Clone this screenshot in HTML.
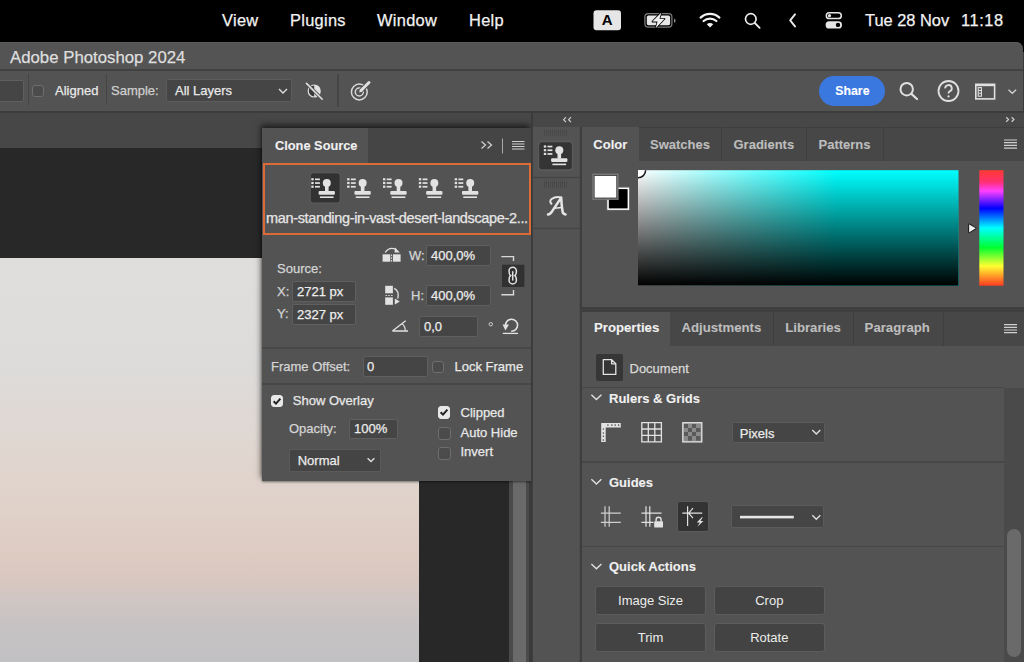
<!DOCTYPE html>
<html><head><meta charset="utf-8">
<style>
*{margin:0;padding:0;box-sizing:border-box}
html,body{width:1024px;height:662px;overflow:hidden;background:#535353;font-family:"Liberation Sans",sans-serif;color:#e0e0e0}
.a{position:absolute}
.t{position:absolute;white-space:nowrap;line-height:1;-webkit-text-stroke:0.25px currentColor}
.t[style*="font-weight:700"]{-webkit-text-stroke:0.1px currentColor}
#menubar{left:0;top:0;width:1024px;height:42px;background:#000}
#menubar .t{color:#f2f2f2;font-size:16.4px;letter-spacing:0.3px}
#titlebar{left:0;top:42px;width:1023px;height:29px;background:#545454;border-bottom:2px solid #414141;border-top-right-radius:7px;box-shadow:inset 0 1px 0 #5c5c5c}
#opts{left:0;top:71px;width:1024px;height:40px;background:#535353}
#optsline{left:0;top:111px;width:1024px;height:2px;background:#3c3c3c}
#doctabs{left:0;top:113px;width:531px;height:35px;background:#474747}
#canvas{left:0;top:148px;width:509px;height:514px;background:#282828}
#image{left:0;top:258px;width:419px;height:404px;background:linear-gradient(#dfdedd 0%,#dddcdb 25%,#dedad8 33%,#e0d7d1 46%,#e0d2ca 60%,#ddcbc2 74%,#d8c7c0 80%,#cdc5c4 86%,#c5c2c3 92%,#c1c0c2 100%)}
#scroll{left:509px;top:148px;width:23.8px;height:514px;background:#4a4a4a}
#dock{left:531px;top:113px;width:51px;height:549px;background:#535353}
#rpanel{left:582px;top:127px;width:442px;height:535px;background:#535353}
.inp{position:absolute;background:#454545;border:1px solid #5f5f5f;border-radius:2px}
.cb{position:absolute;width:12.4px;height:12.4px;border:1.5px solid #6e6e6e;border-radius:3px;background:#4b4b4b}
.cbon{background:#e8e8e8;border-color:#e8e8e8}
.btn{border-radius:3px;background:#434343;border:1.5px solid #5c5c5c;font-size:13px;color:#ececec;text-align:center;line-height:27px;white-space:nowrap}
</style></head><body>
<div id="menubar" class="a">
  <div class="t" style="left:222px;top:12px">View</div>
  <div class="t" style="left:290px;top:12px">Plugins</div>
  <div class="t" style="left:377px;top:12px">Window</div>
  <div class="t" style="left:469px;top:12px">Help</div>
  
  <svg class="a" style="left:588px;top:6px" width="260" height="30" viewBox="588 6 260 30">
    <rect x="593.5" y="10.2" width="27.5" height="20" rx="3" fill="#e6e6e6"/>
    <text x="607.2" y="25.3" font-family="Liberation Sans" font-weight="700" font-size="15" text-anchor="middle" fill="#000">A</text>
    <rect x="644.9" y="13.7" width="27" height="13.4" rx="3.4" fill="none" stroke="#7a7a7a" stroke-width="1.3"/>
    <rect x="646.8" y="15.6" width="23.3" height="9.6" rx="1.6" fill="#e6e6e6"/>
    <path d="M674 18.5 a2 2.2 0 0 1 0 4.3z" fill="#8a8a8a"/>
    <path d="M661.4 12.4 L652.4 21.6 L657.6 21.6 L655.6 28.2 L664.6 18.8 L659.4 18.8z" fill="#f0f0f0" stroke="#000" stroke-width="1.6" stroke-linejoin="round" paint-order="stroke"/>
    <path d="M700.6 17.6 A14 14 0 0 1 719.4 17.6" fill="none" stroke="#f2f2f2" stroke-width="2.2" stroke-linecap="round"/>
    <path d="M703.6 21 A9.6 9.6 0 0 1 716.4 21" fill="none" stroke="#f2f2f2" stroke-width="2.2" stroke-linecap="round"/>
    <path d="M706.8 24.2 L710 27.6 L713.2 24.2 A4.6 4.6 0 0 0 706.8 24.2z" fill="#f2f2f2"/>
    <circle cx="750.8" cy="19" r="5.3" fill="none" stroke="#eaeaea" stroke-width="1.7"/>
    <path d="M754.8 23 L759.6 27.8" stroke="#eaeaea" stroke-width="1.9" stroke-linecap="round"/>
    <path d="M795 14.3 L790.2 20.3 L795 26.4" fill="none" stroke="#eaeaea" stroke-width="1.9" stroke-linecap="round" stroke-linejoin="round"/>
    <rect x="826.3" y="12.8" width="15" height="5.8" rx="2.9" fill="none" stroke="#e6e6e6" stroke-width="1.5"/>
    <circle cx="829.5" cy="15.7" r="1.6" fill="#e6e6e6"/>
    <rect x="825.6" y="21.3" width="16.4" height="7.2" rx="3.6" fill="#e6e6e6"/>
    <circle cx="838" cy="24.9" r="2.2" fill="#000"/>
  </svg>
  <div class="t" style="left:865px;top:12px;font-size:16.4px;letter-spacing:0">Tue 28 Nov</div>
  <div class="t" style="left:961px;top:12px;font-size:16.4px;letter-spacing:0.6px">11:18</div>
</div>
<div class="a" style="left:1008px;top:42px;width:16px;height:12px;background:#000"></div>
<div id="titlebar" class="a"><div class="t" style="left:10px;top:8px;font-size:16.8px;color:#dedede">Adobe Photoshop 2024</div></div>
<div class="a" style="left:1022.6px;top:52px;width:1.4px;height:60px;background:#3a3a3a;z-index:5"></div>
<div id="opts" class="a">
  <div class="inp" style="left:-4px;top:9px;width:28px;height:22px"></div>
  <div class="a" style="left:27.5px;top:3px;width:1.6px;height:31px;background:#454545"></div>
  <div class="cb" style="left:32px;top:14px"></div>
  <div class="t" style="left:55px;top:13px;font-size:13px;color:#e8e8e8">Aligned</div>
  <div class="a" style="left:105.8px;top:3px;width:1.6px;height:31px;background:#454545"></div>
  <div class="t" style="left:111px;top:13px;font-size:13px;color:#cfcfcf">Sample:</div>
  <div class="inp" style="left:166px;top:8px;width:126px;height:23px;background:#454545;border-color:#5c5c5c"></div>
  <div class="t" style="left:175px;top:13px;font-size:13px;color:#e8e8e8">All Layers</div>
  <svg class="a" style="left:277px;top:16px" width="12" height="8"><path d="M2 2 L6 6 L10 2" fill="none" stroke="#ddd" stroke-width="1.4"/></svg>
  <svg class="a" style="left:300px;top:7px" width="30" height="30" viewBox="300 78 30 30">
    <circle cx="314.2" cy="91" r="6.6" fill="#e0e0e0"/>
    <path d="M314.2 85.6 A5.4 5.4 0 0 0 314.2 96.4z" fill="#3a3a3a"/>
    <path d="M306.5 83.4 L322.2 99.2" stroke="#535353" stroke-width="3.4"/>
    <path d="M306.5 83.4 L322.2 99.2" stroke="#e0e0e0" stroke-width="1.6" stroke-linecap="round"/>
  </svg>
  <div class="a" style="left:337px;top:3px;width:1.8px;height:33px;background:#454545"></div>
  <svg class="a" style="left:345px;top:5px" width="32" height="30" viewBox="345 76 32 30">
    <circle cx="359.3" cy="92" r="7.9" fill="none" stroke="#d8d8d8" stroke-width="1.5"/>
    <circle cx="359.3" cy="92" r="4" fill="none" stroke="#d8d8d8" stroke-width="1.5"/>
    <path d="M360 91.5 L369.6 82" stroke="#535353" stroke-width="5"/>
    <path d="M361 90.5 L369 82.5" stroke="#e0e0e0" stroke-width="3" stroke-linecap="round"/>
    <path d="M359.2 92.6 L360.2 89.2 L362.6 91.6z" fill="#e0e0e0"/>
  </svg>
  <div class="a" style="left:819px;top:5px;width:66px;height:30px;border-radius:15px;background:#3a78e0"></div>
  <div class="t" style="left:835.3px;top:14.3px;font-size:12.3px;font-weight:700;color:#fff">Share</div>
  <svg class="a" style="left:896px;top:7px" width="28" height="28" viewBox="896 78 28 28">
    <circle cx="906.7" cy="89.2" r="6.2" fill="none" stroke="#e0e0e0" stroke-width="2"/>
    <path d="M911.4 93.9 L917 99" stroke="#e0e0e0" stroke-width="2.2" stroke-linecap="round"/>
  </svg>
  <svg class="a" style="left:935px;top:7px" width="28" height="28" viewBox="935 78 28 28">
    <circle cx="948.5" cy="91" r="10" fill="none" stroke="#e0e0e0" stroke-width="1.8"/>
    <path d="M945.2 88.4 A3.3 3.3 0 1 1 949.6 91.4 Q948.5 92 948.5 93.6" fill="none" stroke="#e0e0e0" stroke-width="1.8"/>
    <circle cx="948.5" cy="96.4" r="1.1" fill="#e0e0e0"/>
  </svg>
  <svg class="a" style="left:972px;top:8px" width="50" height="26" viewBox="972 79 50 26">
    <rect x="975.8" y="84.3" width="18.8" height="14.6" fill="none" stroke="#e0e0e0" stroke-width="1.6"/>
    <path d="M976 85.6 L994.5 85.6" stroke="#e0e0e0" stroke-width="1.2"/>
    <rect x="978.2" y="87.6" width="3.2" height="8.6" fill="none" stroke="#e0e0e0" stroke-width="1.1"/>
    <path d="M978.2 90.5 H981.4 M978.2 93.3 H981.4" stroke="#e0e0e0" stroke-width="1"/>
    <path d="M1008.5 89.8 L1012.3 93.3 L1016.1 89.8" fill="none" stroke="#d0d0d0" stroke-width="1.4"/>
  </svg>
</div>
<div id="optsline" class="a"></div>
<div id="doctabs" class="a"></div>
<div id="canvas" class="a"></div>
<div id="image" class="a"></div>
<div id="scroll" class="a"><div class="a" style="left:4.1px;top:0;width:12.7px;height:514px;background:#6a6a6a"></div><div class="a" style="left:20px;top:0;width:3.8px;height:514px;background:#3a3a3a"></div></div>
<div id="clone" class="a" style="left:262px;top:128px;width:269px;height:353px;background:#535353;box-shadow:-1px -3px 6px rgba(0,0,0,0.6),0 1px 2px rgba(0,0,0,0.4)">
  <div class="a" style="left:0;top:0;width:269px;height:35px;background:#454545"></div>
  <div class="a" style="left:0;top:0;width:106px;height:35px;background:#535353"></div>
  <div class="t" style="left:13px;top:12px;font-size:12.8px;font-weight:700;color:#f0f0f0">Clone Source</div>
  <svg class="a" style="left:215px;top:8px" width="50" height="20" viewBox="477 136 50 20">
    <path d="M481.5 141.5 L485.5 145 L481.5 148.5 M487.5 141.5 L491.5 145 L487.5 148.5" fill="none" stroke="#cfcfcf" stroke-width="1.3"/>
    <path d="M502.5 138.5 L502.5 153.5" stroke="#aaa" stroke-width="1"/>
    <path d="M512 141.5 H524.5 M512 144 H524.5 M512 146.5 H524.5 M512 149 H524.5" stroke="#cfcfcf" stroke-width="1.2"/>
  </svg>
  <div class="a" style="left:1px;top:35px;width:268px;height:72px;border:2.4px solid #dc6b38"></div>
</div>
<svg class="a" style="left:262px;top:128px" width="269" height="353" viewBox="262 128 269 353">
  <rect x="310.2" y="172.8" width="30" height="30.2" rx="3" fill="#323232" stroke="#5e5e5e" stroke-width="1"/>
  <g transform="translate(311.0,178)" fill="#e2e2e2">
<rect x="0.3" y="0.2" width="2.4" height="2.2"/><rect x="0.3" y="3.9" width="2.4" height="2.2"/><rect x="0.3" y="7.6" width="2.4" height="2.2"/>
<rect x="4" y="0.5" width="4.9" height="1.7"/><rect x="4" y="4.2" width="4.9" height="1.7"/><rect x="4" y="7.9" width="4.9" height="1.7"/>
<circle cx="15.8" cy="5" r="4"/><rect x="14" y="7.5" width="3.6" height="6"/>
<rect x="7.6" y="13" width="16.3" height="3.8" rx="1"/><rect x="8.9" y="18.4" width="13.7" height="1.6"/></g><g transform="translate(346.85,178)" fill="#e2e2e2">
<rect x="0.3" y="0.2" width="2.4" height="2.2"/><rect x="0.3" y="3.9" width="2.4" height="2.2"/><rect x="0.3" y="7.6" width="2.4" height="2.2"/>
<rect x="4" y="0.5" width="4.9" height="1.7"/><rect x="4" y="4.2" width="4.9" height="1.7"/><rect x="4" y="7.9" width="4.9" height="1.7"/>
<circle cx="15.8" cy="5" r="4"/><rect x="14" y="7.5" width="3.6" height="6"/>
<rect x="7.6" y="13" width="16.3" height="3.8" rx="1"/><rect x="8.9" y="18.4" width="13.7" height="1.6"/></g><g transform="translate(382.7,178)" fill="#e2e2e2">
<rect x="0.3" y="0.2" width="2.4" height="2.2"/><rect x="0.3" y="3.9" width="2.4" height="2.2"/><rect x="0.3" y="7.6" width="2.4" height="2.2"/>
<rect x="4" y="0.5" width="4.9" height="1.7"/><rect x="4" y="4.2" width="4.9" height="1.7"/><rect x="4" y="7.9" width="4.9" height="1.7"/>
<circle cx="15.8" cy="5" r="4"/><rect x="14" y="7.5" width="3.6" height="6"/>
<rect x="7.6" y="13" width="16.3" height="3.8" rx="1"/><rect x="8.9" y="18.4" width="13.7" height="1.6"/></g><g transform="translate(418.55,178)" fill="#e2e2e2">
<rect x="0.3" y="0.2" width="2.4" height="2.2"/><rect x="0.3" y="3.9" width="2.4" height="2.2"/><rect x="0.3" y="7.6" width="2.4" height="2.2"/>
<rect x="4" y="0.5" width="4.9" height="1.7"/><rect x="4" y="4.2" width="4.9" height="1.7"/><rect x="4" y="7.9" width="4.9" height="1.7"/>
<circle cx="15.8" cy="5" r="4"/><rect x="14" y="7.5" width="3.6" height="6"/>
<rect x="7.6" y="13" width="16.3" height="3.8" rx="1"/><rect x="8.9" y="18.4" width="13.7" height="1.6"/></g><g transform="translate(454.4,178)" fill="#e2e2e2">
<rect x="0.3" y="0.2" width="2.4" height="2.2"/><rect x="0.3" y="3.9" width="2.4" height="2.2"/><rect x="0.3" y="7.6" width="2.4" height="2.2"/>
<rect x="4" y="0.5" width="4.9" height="1.7"/><rect x="4" y="4.2" width="4.9" height="1.7"/><rect x="4" y="7.9" width="4.9" height="1.7"/>
<circle cx="15.8" cy="5" r="4"/><rect x="14" y="7.5" width="3.6" height="6"/>
<rect x="7.6" y="13" width="16.3" height="3.8" rx="1"/><rect x="8.9" y="18.4" width="13.7" height="1.6"/></g>
  <!-- flip H -->
  <g fill="#e2e2e2"><rect x="382.6" y="254.3" width="7.7" height="7.4"/><rect x="392.9" y="254.3" width="7.7" height="7.4"/>
  <rect x="391" y="254.5" width="0.9" height="1.6"/><rect x="391" y="257.3" width="0.9" height="1.6"/><rect x="391" y="260" width="0.9" height="1.6"/>
  <path d="M395 247.6 L399.8 252.6 L394.6 252.6z"/></g>
  <path d="M385.2 252.5 Q389.5 246 396 249.6" fill="none" stroke="#e2e2e2" stroke-width="1.3"/>
  <!-- flip V -->
  <g fill="#e2e2e2"><rect x="385.2" y="285.8" width="7.7" height="7.5"/><rect x="385.2" y="297.4" width="7.7" height="7.4"/>
  <rect x="385.5" y="295" width="1.6" height="0.9"/><rect x="388.2" y="295" width="1.6" height="0.9"/><rect x="391" y="295" width="1.6" height="0.9"/>
  <path d="M394.8 298.6 L399.8 301.4 L394.8 304.4z"/></g>
  <path d="M394.2 288.4 Q399.5 291 397.8 298.6" fill="none" stroke="#e2e2e2" stroke-width="1.3"/>
  <!-- link -->
  <path d="M501.3 256.6 H513.5 V261" fill="none" stroke="#d8d8d8" stroke-width="1.4"/>
  <path d="M513.5 290 V294.8 H501.3" fill="none" stroke="#d8d8d8" stroke-width="1.4"/>
  <rect x="502" y="264.7" width="22.4" height="22.3" fill="#313131"/>
  <path d="M510.6 275.6 C509.2 274.8 509 273.4 509 271 A3.7 3.7 0 0 1 516.4 271 C516.4 273.4 516.2 274.8 514.8 275.6 C516.2 276.4 516.4 277.8 516.4 280.2 A3.7 3.7 0 0 1 509 280.2 C509 277.8 509.2 276.4 510.6 275.6z" fill="none" stroke="#e2e2e2" stroke-width="1.5"/>
  <path d="M512.7 271.2 V280.6" stroke="#e2e2e2" stroke-width="1.5"/>
  <!-- angle -->
  <path d="M392.4 331 H408 M392.4 331 L405.7 320.8" fill="none" stroke="#e2e2e2" stroke-width="1.3"/>
  <path d="M401.9 323.4 Q405.4 326.6 405.3 330.6" fill="none" stroke="#e2e2e2" stroke-width="1.2"/>
  <circle cx="490.8" cy="324.2" r="1.7" fill="none" stroke="#d0d0d0" stroke-width="1"/>
  <!-- reset -->
  <path d="M505.6 325.6 A6 6 0 1 1 511.2 331.2" fill="none" stroke="#e2e2e2" stroke-width="1.6"/>
  <path d="M502.6 324.4 L509 324.4 L505.4 330.4z" fill="#e2e2e2"/>
  <path d="M502.8 333.4 H518" stroke="#e2e2e2" stroke-width="1.3"/>
</svg>
<div class="a" style="left:262px;top:128px;width:269px;height:353px">
  <div class="a" style="left:4px;top:79px;width:264px;height:24px;overflow:hidden"><div class="t" style="left:0;top:4.3px;font-size:14.5px;letter-spacing:-0.35px;color:#e6e6e6">man-standing-in-vast-desert-landscape-2...</div></div>
  <div class="t" style="left:15px;top:134.4px;font-size:13px;color:#d4d4d4">Source:</div>
  <div class="t" style="left:15px;top:157.4px;font-size:13px;color:#d4d4d4">X:</div>
  <div class="inp" style="left:30px;top:153px;width:64px;height:21px"></div>
  <div class="t" style="left:35px;top:157.4px;font-size:13px;color:#ececec">2721 px</div>
  <div class="t" style="left:15px;top:179.4px;font-size:13px;color:#d4d4d4">Y:</div>
  <div class="inp" style="left:30px;top:176px;width:64px;height:21px"></div>
  <div class="t" style="left:35px;top:180.4px;font-size:13px;color:#ececec">2327 px</div>
  <div class="t" style="left:147px;top:121.4px;font-size:13px;color:#d4d4d4">W:</div>
  <div class="inp" style="left:164px;top:117px;width:65px;height:21px"></div>
  <div class="t" style="left:169px;top:121.4px;font-size:13px;color:#ececec">400,0%</div>
  <div class="t" style="left:149px;top:161.4px;font-size:13px;color:#d4d4d4">H:</div>
  <div class="inp" style="left:164px;top:157px;width:65px;height:21px"></div>
  <div class="t" style="left:169px;top:161.4px;font-size:13px;color:#ececec">400,0%</div>
  <div class="inp" style="left:157px;top:188px;width:59px;height:20.5px"></div>
  <div class="t" style="left:162px;top:192.4px;font-size:13px;color:#ececec">0,0</div>
  <div class="a" style="left:0;top:219px;width:269px;height:2px;background:#474747"></div>
  <div class="t" style="left:9px;top:232.4px;font-size:13px;color:#d4d4d4">Frame Offset:</div>
  <div class="inp" style="left:100.5px;top:228px;width:65px;height:20.5px"></div>
  <div class="t" style="left:105px;top:232.4px;font-size:13px;color:#ececec">0</div>
  <div class="cb" style="left:169.6px;top:232.6px"></div>
  <div class="t" style="left:192.5px;top:232.4px;font-size:13px;color:#e8e8e8">Lock Frame</div>
  <div class="a" style="left:0;top:255px;width:269px;height:2px;background:#474747"></div>
  <div class="cb cbon" style="left:8.7px;top:266.5px"></div>
  <svg class="a" style="left:8.7px;top:266.5px" width="12" height="12"><path d="M2.6 6.2 L5 8.6 L9.4 3.6" fill="none" stroke="#222" stroke-width="2"/></svg>
  <div class="t" style="left:30.8px;top:265.9px;font-size:13px;color:#e8e8e8">Show Overlay</div>
  <div class="t" style="left:27px;top:294.4px;font-size:13px;color:#d4d4d4">Opacity:</div>
  <div class="inp" style="left:87px;top:290.7px;width:49px;height:20.6px"></div>
  <div class="t" style="left:92px;top:294.4px;font-size:13px;color:#ececec">100%</div>
  <div class="inp" style="left:26.5px;top:321.3px;width:92px;height:23px;background:#444;border-color:#5a5a5a"></div>
  <div class="t" style="left:35.7px;top:326.4px;font-size:13px;color:#ececec">Normal</div>
  <svg class="a" style="left:103px;top:328px" width="12" height="8"><path d="M2.6 2.2 L6 5.6 L9.4 2.2" fill="none" stroke="#ddd" stroke-width="1.4"/></svg>
  <div class="cb cbon" style="left:176.1px;top:278.3px"></div>
  <svg class="a" style="left:176.1px;top:278.3px" width="12" height="12"><path d="M2.6 6.2 L5 8.6 L9.4 3.6" fill="none" stroke="#222" stroke-width="2"/></svg>
  <div class="t" style="left:198.5px;top:277.9px;font-size:13px;color:#e8e8e8">Clipped</div>
  <div class="cb" style="left:176.3px;top:299.4px"></div>
  <div class="t" style="left:198.5px;top:297.7px;font-size:13px;color:#e8e8e8">Auto Hide</div>
  <div class="cb" style="left:176.3px;top:319.2px"></div>
  <div class="t" style="left:198.5px;top:317.4px;font-size:13px;color:#e8e8e8">Invert</div>
</div>
<div id="dock" class="a"></div>
<div id="topstrip" class="a" style="left:531px;top:113px;width:493px;height:14px;background:#474747"></div>
<svg class="a" style="left:531px;top:112px" width="493" height="550" viewBox="531 112 493 550">
  <path d="M566 117.2 L563.6 119.7 L566 122.2 M571 117.2 L568.6 119.7 L571 122.2" fill="none" stroke="#cfcfcf" stroke-width="1.2"/>
  <path d="M1006.2 117.2 L1008.6 119.5 L1006.2 121.8 M1011.6 117.2 L1014 119.5 L1011.6 121.8" fill="none" stroke="#cfcfcf" stroke-width="1.2"/>
  <rect x="531" y="112" width="1.8" height="550" fill="#3a3a3a"/>
  <rect x="579.8" y="127" width="2.4" height="535" fill="#3e3e3e"/>
  <rect x="544" y="129.7" width="1" height="6.3" fill="#484848"/><rect x="546" y="129.7" width="1" height="6.3" fill="#484848"/><rect x="548" y="129.7" width="1" height="6.3" fill="#484848"/><rect x="550" y="129.7" width="1" height="6.3" fill="#484848"/><rect x="552" y="129.7" width="1" height="6.3" fill="#484848"/><rect x="554" y="129.7" width="1" height="6.3" fill="#484848"/><rect x="556" y="129.7" width="1" height="6.3" fill="#484848"/><rect x="558" y="129.7" width="1" height="6.3" fill="#484848"/><rect x="560" y="129.7" width="1" height="6.3" fill="#484848"/><rect x="562" y="129.7" width="1" height="6.3" fill="#484848"/><rect x="564" y="129.7" width="1" height="6.3" fill="#484848"/><rect x="566" y="129.7" width="1" height="6.3" fill="#484848"/>
  <rect x="538" y="140.3" width="35" height="30.6" rx="4" fill="#5a5a5a"/>
  <rect x="539.2" y="142.2" width="32.6" height="27" rx="3" fill="#343434"/>
  <g transform="translate(543.5,145.2) scale(1.0)" fill="#e2e2e2">
<rect x="0.3" y="0.2" width="2.4" height="2.2"/><rect x="0.3" y="3.9" width="2.4" height="2.2"/><rect x="0.3" y="7.6" width="2.4" height="2.2"/>
<rect x="4" y="0.5" width="4.9" height="1.7"/><rect x="4" y="4.2" width="4.9" height="1.7"/><rect x="4" y="7.9" width="4.9" height="1.7"/>
<circle cx="15.8" cy="5" r="4"/><rect x="14" y="7.5" width="3.6" height="6"/>
<rect x="7.6" y="13" width="16.3" height="3.8" rx="1"/><rect x="8.9" y="18.4" width="13.7" height="1.6"/></g>
  <rect x="532.6" y="176.8" width="47.2" height="1.4" fill="#454545"/>
  <rect x="544" y="181.3" width="1" height="6.3" fill="#484848"/><rect x="546" y="181.3" width="1" height="6.3" fill="#484848"/><rect x="548" y="181.3" width="1" height="6.3" fill="#484848"/><rect x="550" y="181.3" width="1" height="6.3" fill="#484848"/><rect x="552" y="181.3" width="1" height="6.3" fill="#484848"/><rect x="554" y="181.3" width="1" height="6.3" fill="#484848"/><rect x="556" y="181.3" width="1" height="6.3" fill="#484848"/><rect x="558" y="181.3" width="1" height="6.3" fill="#484848"/><rect x="560" y="181.3" width="1" height="6.3" fill="#484848"/><rect x="562" y="181.3" width="1" height="6.3" fill="#484848"/><rect x="564" y="181.3" width="1" height="6.3" fill="#484848"/><rect x="566" y="181.3" width="1" height="6.3" fill="#484848"/>
  <path d="M548 214.6 Q549.6 214.6 551.4 212.4 L561.2 197.6 Q561.6 206 562.6 211.8 Q563 214.2 565.6 214.4" fill="none" stroke="#e6e6e6" stroke-width="2.5" stroke-linecap="round" stroke-linejoin="round"/>
  <path d="M561.2 197.6 Q556 196 551.6 199 Q549 201.2 551.4 203.8" fill="none" stroke="#e6e6e6" stroke-width="2" stroke-linecap="round"/>
  <path d="M554 208.2 L561.8 207.6" stroke="#e6e6e6" stroke-width="1.5" stroke-linecap="round"/>
  <rect x="532.6" y="227.8" width="47.2" height="1.4" fill="#454545"/>
</svg>
<div id="rpanel" class="a"></div>
<div id="rp" class="a" style="left:582px;top:127px;width:442px;height:535px">
  <div class="a" style="left:0;top:0;width:442px;height:34px;background:#474747;border-top:1px solid #3e3e3e"></div>
  <div class="a" style="left:0;top:0;width:57px;height:34px;background:#535353"></div>
  <div class="a" style="left:139.4px;top:0;width:1px;height:34px;background:#3f3f3f"></div>
  <div class="a" style="left:224.2px;top:0;width:1px;height:34px;background:#3f3f3f"></div>
  <div class="a" style="left:301px;top:0;width:1px;height:34px;background:#3f3f3f"></div>
  <div class="t" style="left:11.3px;top:10.5px;font-size:13px;font-weight:700;color:#f0f0f0">Color</div>
  <div class="t" style="left:68px;top:10.5px;font-size:13px;font-weight:700;color:#bdbdbd">Swatches</div>
  <div class="t" style="left:151.5px;top:10.5px;font-size:13px;font-weight:700;color:#bdbdbd">Gradients</div>
  <div class="t" style="left:236.5px;top:10.5px;font-size:13px;font-weight:700;color:#bdbdbd">Patterns</div>
  <div class="a" style="left:0;top:180px;width:442px;height:5px;background:#3f3f3f"></div>
  <div class="a" style="left:0;top:185px;width:442px;height:33.5px;background:#474747"></div>
  <div class="a" style="left:0;top:185px;width:88px;height:33.5px;background:#535353"></div>
  <div class="a" style="left:191.3px;top:185px;width:1px;height:33.5px;background:#3f3f3f"></div>
  <div class="a" style="left:270.7px;top:185px;width:1px;height:33.5px;background:#3f3f3f"></div>
  <div class="a" style="left:360.5px;top:185px;width:1px;height:33.5px;background:#3f3f3f"></div>
  <div class="t" style="left:12px;top:194px;font-size:13.2px;font-weight:700;color:#f0f0f0">Properties</div>
  <div class="t" style="left:99.4px;top:194px;font-size:13.2px;font-weight:700;color:#bdbdbd">Adjustments</div>
  <div class="t" style="left:203.2px;top:194px;font-size:13.2px;font-weight:700;color:#bdbdbd">Libraries</div>
  <div class="t" style="left:282.6px;top:194px;font-size:13.2px;font-weight:700;color:#bdbdbd">Paragraph</div>
  <div class="a" style="left:14px;top:226.7px;width:27px;height:27px;border-radius:2px;background:#363636"></div>
  <div class="t" style="left:47.5px;top:234.5px;font-size:13px;color:#d8d8d8">Document</div>
  <div class="a" style="left:0;top:259.5px;width:422px;height:1.5px;background:#474747"></div>
  <div class="a" style="left:422px;top:261px;width:20px;height:274px;background:#4a4a4a"></div>
  <div class="a" style="left:425.4px;top:402px;width:13.6px;height:128px;border-radius:7px;background:#6a6a6a"></div>
  <div class="t" style="left:27px;top:265px;font-size:13px;font-weight:700;color:#f0f0f0">Rulers &amp; Grids</div>
  <div class="a" style="left:149.5px;top:294.6px;width:93px;height:21.5px;border-radius:2px;background:#454545;border:1px solid #5a5a5a"></div>
  <div class="t" style="left:157.8px;top:299.5px;font-size:13px;color:#ececec">Pixels</div>
  <div class="a" style="left:0;top:334px;width:422px;height:1.5px;background:#474747"></div>
  <div class="t" style="left:27px;top:349px;font-size:13px;font-weight:700;color:#f0f0f0">Guides</div>
  <div class="a" style="left:95px;top:373.6px;width:32.3px;height:31.4px;border-radius:3px;background:#333;border:1px solid #5a5a5a"></div>
  <div class="a" style="left:149px;top:378.3px;width:93.3px;height:22.7px;border-radius:2px;background:#454545;border:1px solid #5a5a5a"></div>
  <div class="a" style="left:0;top:418.5px;width:422px;height:1.5px;background:#474747"></div>
  <div class="t" style="left:27px;top:433px;font-size:13px;font-weight:700;color:#f0f0f0">Quick Actions</div>
  <div class="btn a" style="left:13.3px;top:459px;width:110.5px;height:29px">Image Size</div>
  <div class="btn a" style="left:131.9px;top:459px;width:110.8px;height:29px">Crop</div>
  <div class="btn a" style="left:13.3px;top:496px;width:110.5px;height:29px">Trim</div>
  <div class="btn a" style="left:131.9px;top:496px;width:110.8px;height:29px">Rotate</div>
</div>
<svg class="a" style="left:582px;top:127px" width="442" height="535" viewBox="582 127 442 535">
  <path d="M1004 140.0 H1017 M1004 142.70000000000002 H1017 M1004 145.4 H1017 M1004 148.1 H1017" stroke="#cfcfcf" stroke-width="1.2"/>
  <path d="M1004 324.6 H1017 M1004 327.3 H1017 M1004 330 H1017 M1004 332.7 H1017" stroke="#cfcfcf" stroke-width="1.2"/>
  <defs>
    <linearGradient id="gh" x1="0" y1="0" x2="1" y2="0"><stop offset="0" stop-color="#fff"/><stop offset="0.62" stop-color="#00ffff"/><stop offset="1" stop-color="#00ffff"/></linearGradient>
    <linearGradient id="gv" x1="0" y1="0" x2="0" y2="1"><stop offset="0" stop-color="#000" stop-opacity="0"/><stop offset="1" stop-color="#000"/></linearGradient>
    <linearGradient id="hue" x1="0" y1="0" x2="0" y2="1">
      <stop offset="0" stop-color="#ff3a30"/><stop offset="0.1" stop-color="#ff3070"/><stop offset="0.18" stop-color="#ff40ff"/><stop offset="0.33" stop-color="#0000ff"/>
      <stop offset="0.5" stop-color="#00ffff"/><stop offset="0.67" stop-color="#00ff30"/><stop offset="0.83" stop-color="#ffff30"/><stop offset="1" stop-color="#ff3a20"/>
    </linearGradient>
  </defs>
  <rect x="638" y="170.2" width="320.5" height="115.5" fill="url(#gh)"/>
  <rect x="638" y="170.2" width="320.5" height="115.5" fill="url(#gv)"/>
  <clipPath id="gclip"><rect x="638" y="170.2" width="320.5" height="115.5"/></clipPath><circle cx="638" cy="170.2" r="7.6" fill="#fff" stroke="#1a1a1a" stroke-width="1.6" clip-path="url(#gclip)"/>
  <rect x="979.3" y="170.2" width="24.2" height="115.5" fill="url(#hue)"/>
  <path d="M968.6 225 Q968.6 223.6 970 224.2 L975.6 227.6 Q976.6 228.3 975.6 229 L970 232.4 Q968.6 233.2 968.6 231.6z" fill="#f2f2f2" stroke="#1e1e1e" stroke-width="1.1" stroke-linejoin="round"/>
  <rect x="606.4" y="186.7" width="23.6" height="24.1" fill="#666"/>
  <rect x="607.3" y="187.6" width="21.8" height="22.3" fill="#fff"/>
  <rect x="608.8" y="189.1" width="18.8" height="19.3" fill="#000"/>
  <rect x="592.3" y="173.6" width="26.3" height="26.3" fill="#7a7a7a"/>
  <rect x="593.8" y="175.1" width="23.3" height="23.3" fill="#333"/>
  <rect x="594.6" y="175.9" width="21.7" height="21.7" fill="#fff"/>
  <!-- doc icon -->
  <path d="M603.3 359.6 H611.6 L615.8 363.8 V374.4 H603.3z M611.6 359.6 V363.8 H615.8" fill="none" stroke="#e2e2e2" stroke-width="1.3" stroke-linejoin="round"/>
  <!-- chevrons -->
  <path d="M591.4 394.8 L596.4 399.6 L601.4 394.8" fill="none" stroke="#e0e0e0" stroke-width="1.4"/>
  <path d="M591.4 479.2 L596.4 484 L601.4 479.2" fill="none" stroke="#e0e0e0" stroke-width="1.4"/>
  <path d="M591.4 564 L596.4 568.8 L601.4 564" fill="none" stroke="#e0e0e0" stroke-width="1.4"/>
  <path d="M812.3 430 L816.3 434 L820.3 430" fill="none" stroke="#ddd" stroke-width="1.4"/>
  <path d="M812.3 515.2 L816.3 519.2 L820.3 515.2" fill="none" stroke="#ddd" stroke-width="1.4"/>
  <rect x="740" y="515.8" width="53.8" height="2.6" fill="#e6e6e6"/>
  <!-- ruler icon -->
  <path d="M601.2 422.9 H620.8 V427.4 H605.7 V442 H601.2z" fill="#e2e2e2"/>
  <g fill="#505050"><circle cx="607.9" cy="425.1" r="0.8"/><circle cx="611.9" cy="425.1" r="0.8"/><circle cx="615.2" cy="425.1" r="0.8"/><circle cx="618.6" cy="425.1" r="0.8"/>
  <circle cx="603.4" cy="429" r="0.8"/><circle cx="603.4" cy="433" r="0.8"/><circle cx="603.4" cy="436.3" r="0.8"/><circle cx="603.4" cy="440.1" r="0.8"/></g>
  <!-- grid icon -->
  <path d="M641.8 422.6 H661.4 V441.9 H641.8z M648.3 422.6 V441.9 M654.8 422.6 V441.9 M641.8 429 H661.4 M641.8 435.4 H661.4" fill="none" stroke="#e2e2e2" stroke-width="1.3"/>
  <!-- checker icon -->
  <rect x="682.8" y="422.7" width="19" height="19.2" fill="#8a8a8a" stroke="#e2e2e2" stroke-width="1.3"/>
  <g fill="#5a5a5a"><rect x="684" y="424" width="4" height="4"/><rect x="692" y="424" width="4" height="4"/><rect x="688" y="428" width="4" height="4"/><rect x="696" y="428" width="4.4" height="4"/><rect x="684" y="432" width="4" height="4"/><rect x="692" y="432" width="4" height="4"/><rect x="688" y="436" width="4" height="4.6"/><rect x="696" y="436" width="4.4" height="4.6"/></g>
  <!-- guides icons -->
  <path d="M605 506.2 V526.7 M609.2 506.2 V526.7 M600.9 513.2 H620.8 M600.9 522.4 H620.8" fill="none" stroke="#cfcfcf" stroke-width="1.2"/>
  <path d="M646 506.2 V526.7 M649.8 506.2 V526.7 M641.4 513.2 H661.5 M641.4 522.4 H653.5" fill="none" stroke="#e2e2e2" stroke-width="1.2"/>
  <rect x="654.2" y="521.2" width="8.8" height="6.2" rx="0.6" fill="#e2e2e2"/>
  <path d="M656.1 521.4 V519.8 A2.5 2.5 0 0 1 661.1 519.8 V521.4" fill="none" stroke="#e2e2e2" stroke-width="1.4"/>
  <path d="M687.6 506.2 V526.1 M682.3 513.2 H702.2 M693 508.2 L688.6 513.2 L693 518.2" fill="none" stroke="#e2e2e2" stroke-width="1.2"/>
  <path d="M701.8 517.3 L696.8 522.4 L699.8 522.4 L697.4 526.7 L703.4 521 L700.4 521 L702.8 517.3z" fill="#e2e2e2"/>
</svg>
</body></html>
